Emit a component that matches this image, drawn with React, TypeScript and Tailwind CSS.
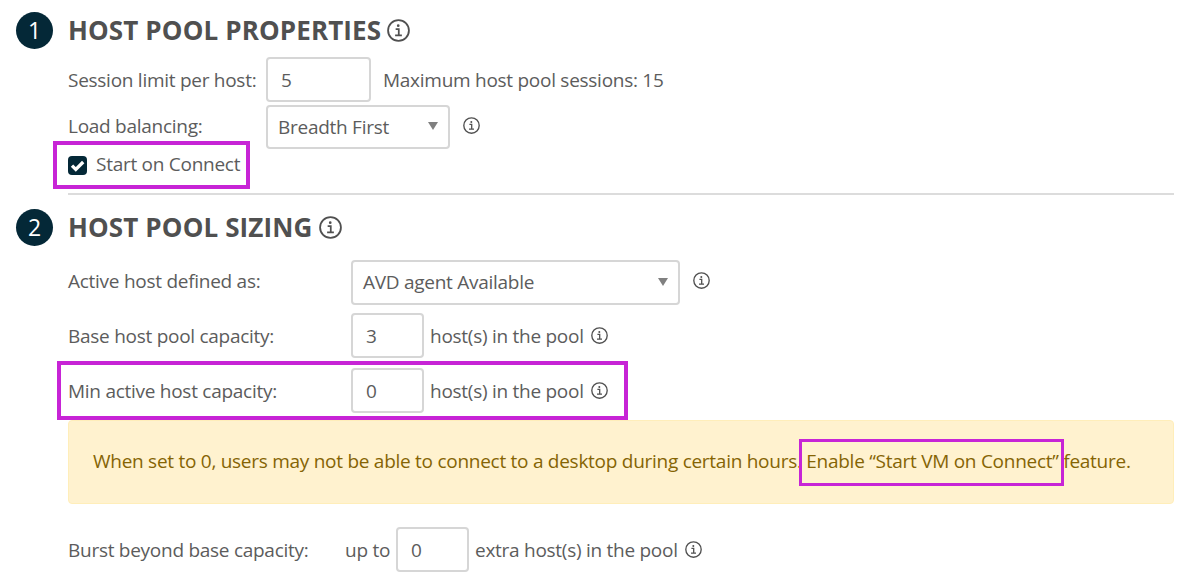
import { useState } from "react";
import type { ReactNode } from "react";
import clsx from "clsx";

function InfoIcon({ className }: { className?: string }) {
  return (
    <svg viewBox="0 0 17 17" fill="none" className={clsx("shrink-0 text-[#505050]", className)} aria-hidden>
      <circle cx="8.5" cy="8.5" r="7.7" stroke="currentColor" strokeWidth="1.35" />
      <circle cx="8.3" cy="4.9" r="1" fill="currentColor" />
      <path d="M6.4 7.4h2.3v4.5M6 12.1h5" stroke="currentColor" strokeWidth="1.3" />
    </svg>
  );
}

function Highlight({ className }: { className: string }) {
  return <div className={clsx("pointer-events-none absolute border-[#c724d6]", className)} aria-hidden />;
}

function SectionTitle({ step, children }: { step: number; children: ReactNode }) {
  return (
    <div className="flex h-[37px] items-center">
      <span className="flex size-[37px] items-center justify-center rounded-full bg-[#042837] text-[23px] text-white">
        {step}
      </span>
      <h2 className="ml-[15px] text-[26px] leading-[35px] font-bold tracking-[0.13px] text-[#505050]">{children}</h2>
      <InfoIcon className="mb-px ml-1.5 size-[23px]" />
    </div>
  );
}

function NumberInput({ label, initial, className }: { label: string; initial: string; className: string }) {
  const [value, setValue] = useState(initial);
  return (
    <input
      aria-label={label}
      inputMode="numeric"
      className={clsx("h-[45px] shrink-0 rounded border-2 border-[#d6d6d6] bg-white pl-[13px] outline-none", className)}
      value={value}
      onChange={(e) => setValue(e.target.value)}
    />
  );
}

function SelectBox({ value, className }: { value: string; className: string }) {
  return (
    <button
      type="button"
      className={clsx(
        "flex shrink-0 items-center justify-between rounded border-2 border-[#d6d6d6] bg-white pr-2.5 pl-2.5",
        className,
      )}
    >
      <span>{value}</span>
      <svg viewBox="0 0 10 8" className="mb-0.5 h-2 w-2.5" aria-hidden>
        <path d="M0 0h10L5 8z" fill="#808080" />
      </svg>
    </button>
  );
}

export default function App() {
  const [startOnConnect, setStartOnConnect] = useState(true);

  return (
    <main className="h-[585px] w-[1193px] overflow-hidden bg-white pt-3 pr-[19px] pl-4 font-['Open_Sans',sans-serif] text-[19px] leading-[27px] tracking-[-0.27px] whitespace-nowrap text-[#5c5c5c]">
      <section>
        <SectionTitle step={1}>HOST POOL PROPERTIES</SectionTitle>
        <div className="ml-[52px]">
          <div className="mt-2 flex h-[45px] items-center">
            <span className="w-[198px] pt-0.5">Session limit per host:</span>
            <NumberInput label="Session limit per host" initial="5" className="w-[105px]" />
            <span className="ml-3 pt-0.5">Maximum host pool sessions: 15</span>
          </div>
          <div className="mt-[3px] flex h-11 items-center">
            <span className="w-[198px] pb-px">Load balancing:</span>
            <SelectBox value="Breadth First" className="h-11 w-[184px]" />
            <InfoIcon className="mb-[3px] ml-[13px] size-[17px]" />
          </div>
          <div className="relative flex h-8 items-center">
            <label className="flex items-center pb-px">
              <input
                type="checkbox"
                className="sr-only"
                checked={startOnConnect}
                onChange={(e) => setStartOnConnect(e.target.checked)}
              />
              <span className="mt-px flex size-[19px] items-center justify-center rounded bg-[#042837]">
                {startOnConnect && (
                  <svg viewBox="0 0 19 19" fill="none" className="size-[19px]" aria-hidden>
                    <path d="M4 9.6l3.8 3.9L15.2 6" stroke="white" strokeWidth="3.3" />
                  </svg>
                )}
              </span>
              <span className="ml-[9px]">Start on Connect</span>
            </label>
            <Highlight className="-top-2 -left-[15px] h-12 w-[197px] border-4" />
          </div>
          <hr className="mt-3 border-t-2 border-[#dcdcdc]" />
        </div>
      </section>

      <section className="mt-3.5">
        <SectionTitle step={2}>HOST POOL SIZING</SectionTitle>
        <div className="ml-[52px]">
          <div className="mt-3.5 flex h-[45px] items-center">
            <span className="w-[283px] pb-[3px]">Active host defined as:</span>
            <SelectBox value="AVD agent Available" className="h-[45px] w-[329px]" />
            <InfoIcon className="mb-[5px] ml-[13px] size-[17px]" />
          </div>
          <div className="mt-2 flex h-[45px] items-center">
            <span className="w-[283px] pt-0.5">Base host pool capacity:</span>
            <NumberInput label="Base host pool capacity" initial="3" className="w-[73px]" />
            <span className="ml-1.5 pt-0.5">host(s) in the pool</span>
            <InfoIcon className="mb-px ml-[7px] size-[17px]" />
          </div>
          <div className="relative mt-2.5 flex h-[45px] items-center">
            <span className="w-[283px] pt-0.5">Min active host capacity:</span>
            <NumberInput label="Min active host capacity" initial="0" className="w-[73px]" />
            <span className="ml-1.5 pt-0.5">host(s) in the pool</span>
            <InfoIcon className="mb-px ml-[7px] size-[17px]" />
            <Highlight className="-top-[7px] -left-[11px] h-[59px] w-[571px] border-4" />
          </div>
          <p className="mt-[7px] flex h-[84px] items-center rounded border border-[#ffeeba] bg-[#fff2cf] pb-px pl-6 text-[#856404]">
            When set to 0, users may not be able to connect to a desktop during certain hours.&nbsp;
            <span className="relative">
              Enable “Start VM on Connect”
              <Highlight className="-top-[9px] -left-[7px] h-[47px] w-[265px] border-3" />
            </span>
            &nbsp;feature.
          </p>
          <div className="mt-[23px] flex h-[45px] items-center">
            <span className="w-[277px] pt-0.5">Burst beyond base capacity:</span>
            <span className="w-[51px] pt-0.5">up to</span>
            <NumberInput label="Burst beyond base capacity" initial="0" className="w-[73px]" />
            <span className="ml-1.5 pt-0.5">extra host(s) in the pool</span>
            <InfoIcon className="ml-[7px] size-[17px]" />
          </div>
        </div>
      </section>
    </main>
  );
}
